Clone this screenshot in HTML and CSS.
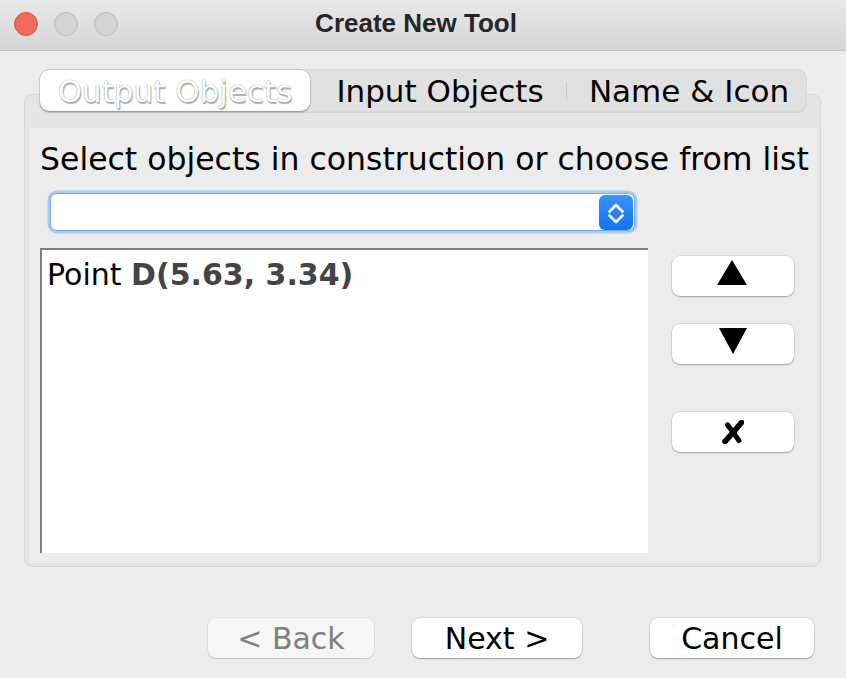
FILE: index.html
```html
<!DOCTYPE html>
<html>
<head>
<meta charset="utf-8">
<link rel="stylesheet" href="styles.css">
</head>
<body>
<div class="window">
  <div class="titlebar">
    <div class="lights">
      <span class="light close"></span>
      <span class="light"></span>
      <span class="light"></span>
    </div>
    <div class="title">Create New Tool</div>
    <div></div>
  </div>
  <div class="content">
    <div class="tabs">
      <div class="tab tab-out active">Output Objects</div>
      <div class="tab tab-in">Input Objects</div>
      <div class="sep"></div>
      <div class="tab tab-name">Name &amp; Icon</div>
    </div>
    <div class="panel">
      <div class="panel-inner">
        <div class="label">Select objects in construction or choose from list</div>
        <div class="combo">
          <div class="stepper">
            <svg width="34" height="35" viewBox="0 0 34 35"><path d="M10.5 16.5 L17 10 L23.5 16.5 M10.5 20.5 L17 27 L23.5 20.5" fill="none" stroke="#fff" stroke-width="2.6" stroke-linecap="round" stroke-linejoin="round"/></svg>
          </div>
        </div>
        <div class="row">
          <div class="list">
            <div class="item">Point <b>D(5.63, 3.34)</b></div>
          </div>
          <div class="side">
            <div class="btn sbtn up"><svg width="30" height="25" viewBox="0 0 30 25"><path d="M15 0 L30 25 L0 25 Z" fill="#000"/></svg></div>
            <div class="btn sbtn down"><svg width="28" height="26" viewBox="0 0 28 26"><path d="M0 0 L28 0 L14 26 Z" fill="#000"/></svg></div>
            <div class="btn sbtn del"><svg width="22" height="24" viewBox="0 0 22 24"><path d="M19.5 2.5 C15 8 9 15 3 21.5" fill="none" stroke="#000" stroke-width="5.6" stroke-linecap="round"/><path d="M5.5 5 C9 9 13 15 17 20.5" fill="none" stroke="#000" stroke-width="5" stroke-linecap="round"/></svg></div>
          </div>
        </div>
      </div>
    </div>
    <div class="footer">
      <div class="btn fbtn back">&lt; Back</div>
      <div class="btn fbtn next">Next &gt;</div>
      <div class="btn fbtn cancel">Cancel</div>
    </div>
  </div>
</div>
</body>
</html>
```
FILE: styles.css
```css
html, body {
  margin: 0;
  padding: 0;
}
body {
  background: #ececec;
  font-family: "DejaVu Sans", sans-serif;
  color: #000;
}
.window {
  width: 846px;
  height: 678px;
  background: #ececec;
  overflow: hidden;
}
.titlebar {
  height: 50px;
  border-bottom: 1px solid #c2c2c2;
  background: linear-gradient(#e9e9e9, #d5d5d5);
  display: grid;
  grid-template-columns: 1fr auto 1fr;
  align-items: center;
}
.lights {
  display: flex;
  gap: 16px;
  padding-left: 14px;
  padding-bottom: 3px;
}
.light {
  width: 22px;
  height: 22px;
  border-radius: 50%;
  background: #d4d4d4;
  border: 1px solid #bdbdbd;
}
.light.close {
  background: #ee6a5f;
  border-color: #d5544a;
}
.title {
  font-family: "Liberation Sans", Arial, sans-serif;
  font-weight: bold;
  font-size: 26px;
  color: #262626;
  padding-right: 14px;
  padding-bottom: 4px;
}
.content {
  padding-top: 18px;
}
.tabs {
  position: relative;
  z-index: 1;
  margin: 0 0 -18px 40px;
  width: 767px;
  height: 43px;
  box-sizing: border-box;
  background: #e1e1e1;
  border-radius: 10px;
  box-shadow: inset 0 0 0 1px #d9d9d9, 0 1px 0 #d2d2d2;
  display: flex;
  align-items: center;
}
.tab {
  height: 43px;
  display: flex;
  align-items: center;
  justify-content: center;
  font-size: 31px;
  box-sizing: border-box;
}
.tab-out { width: 270px; }
.tab-in { width: 256px; padding-left: 4px; }
.tab-name { width: 240px; padding-left: 4px; }
.sep {
  width: 1px;
  height: 18px;
  background: #cbcbcb;
}
.tab.active {
  height: 41px;
  background: #fff;
  border-radius: 9px;
  box-shadow: 0 0 0 0.5px rgba(0,0,0,0.15), 0 1px 2px rgba(0,0,0,0.3);
  color: #fdfdfd;
  text-shadow: 0 0 1px #7a7a7a, 1px 2px 1px #b0b0b0;
}
.panel {
  margin: 0 25px 0 24px;
  height: 473px;
  box-sizing: border-box;
  border: 1px solid #d8d8d8;
  border-radius: 8px;
  background: #e5e5e5;
  padding: 33px 3px 3px 5px;
}
.panel-inner {
  height: 100%;
  background: #ececec;
  padding-top: 13px;
  box-sizing: border-box;
}
.label {
  font-size: 31.5px;
  line-height: 36px;
  padding-left: 10px;
  white-space: nowrap;
}
.combo {
  margin: 16px 0 0 20px;
  width: 585px;
  height: 38px;
  box-sizing: border-box;
  background: #fff;
  border: 1px solid #78abee;
  border-radius: 7px;
  box-shadow: 0 0 0 2.5px #a8caf4;
  display: flex;
  justify-content: flex-end;
  align-items: center;
  padding-right: 1px;
}
.stepper {
  width: 34px;
  height: 35px;
  border-radius: 6px;
  background: linear-gradient(#3b93fb, #0f74f0);
  display: flex;
}
.row {
  display: flex;
  margin-top: 17px;
  padding-left: 10px;
  gap: 24px;
}
.list {
  width: 608px;
  height: 305px;
  box-sizing: border-box;
  background: #fff;
  border-top: 2px solid #7e7e7e;
  border-left: 2px solid #7e7e7e;
}
.item {
  font-size: 30px;
  line-height: 36px;
  padding: 7px 0 0 5px;
  white-space: nowrap;
}
.item b {
  color: #444;
}
.side {
  display: flex;
  flex-direction: column;
  padding-top: 8px;
}
.btn {
  background: #fff;
  border-radius: 8px;
  box-shadow: 0 0 0 0.5px rgba(0,0,0,0.14), 0 1px 1.5px rgba(0,0,0,0.28);
  display: flex;
  align-items: center;
  justify-content: center;
  box-sizing: border-box;
}
.sbtn {
  width: 122px;
  height: 40px;
}
.sbtn svg { display: block; }
.up { padding-bottom: 7px; }
.up svg { margin-left: -2px; }
.down { margin-top: 28px; padding-bottom: 6px; }
.del { margin-top: 48px; padding-bottom: 1px; }
.footer {
  display: flex;
  margin-top: 51px;
  padding-left: 208px;
}
.fbtn {
  height: 40px;
  font-size: 30px;
}
.back {
  width: 166px;
  background: #f6f6f6;
  color: #808080;
  box-shadow: 0 0 0 0.5px rgba(0,0,0,0.08), 0 1px 1px rgba(0,0,0,0.12);
}
.next {
  width: 170px;
  margin-left: 38px;
}
.cancel {
  width: 164px;
  margin-left: 68px;
}
```
